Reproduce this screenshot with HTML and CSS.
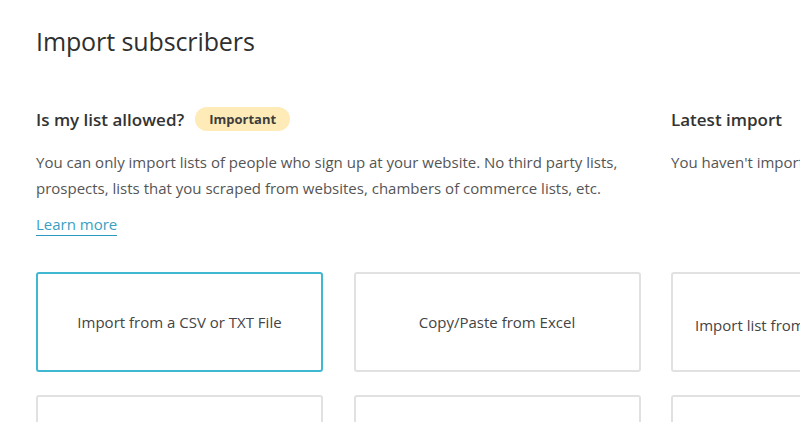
FILE: index.html
```
<!DOCTYPE html>
<html>
<head>
    <meta charset="utf-8" />
    <title>Import subscribers</title>
    <link rel="stylesheet" href="styles.css">
</head>
<body>
    <div class="page">
        <h1 class="page-title">Import subscribers</h1>

        <div class="info-row">
            <!-- 左侧说明 -->
            <div class="allowed">
                <h2 class="section-title">Is my list allowed? <span class="badge">Important</span></h2>
                <p class="section-text">You can only import lists of people who sign up at your website. No third party lists, prospects, lists that you scraped from websites, chambers of commerce lists, etc.</p>
                <a href="#" class="learn-more">Learn more</a>
            </div>
            <!-- 右侧最近导入 -->
            <div class="latest">
                <h2 class="section-title">Latest import</h2>
                <p class="section-text nowrap">You haven't imported any subscribers yet.</p>
            </div>
        </div>

        <div class="import-options">
            <div class="option active"><span>Import from a CSV or TXT File</span></div>
            <div class="option"><span>Copy/Paste from Excel</span></div>
            <div class="option lower"><span>Import list from MailChimp</span></div>
            <div class="option"></div>
            <div class="option"></div>
            <div class="option"></div>
        </div>
    </div>
</body>
</html>
```
FILE: styles.css
```
/* 全局样式 */
body {
    margin: 0;
    background-color: #ffffff;
    font-family: "Open Sans", "Liberation Sans", sans-serif;
    color: #444;
    overflow: hidden;
}

.page {
    padding: 25px 36px 0;
    width: 922px;
}

/* 页面标题 */
.page-title {
    margin: 0;
    font-size: 25px;
    line-height: 32px;
    font-weight: 500;
    color: #2f2f2f;
    letter-spacing: -0.1px;
}

/* 信息区 */
.info-row {
    display: grid;
    grid-template-columns: 605px 287px;
    column-gap: 30px;
    margin-top: 49px;
}

.section-title {
    margin: 0;
    display: flex;
    align-items: center;
    gap: 11px;
    height: 26px;
    font-size: 17px;
    font-weight: 600;
    color: #333;
}

.badge {
    display: inline-block;
    padding: 0 14px;
    height: 24px;
    line-height: 24px;
    border-radius: 12px;
    background-color: #feebb8;
    font-size: 13px;
    font-weight: 700;
    color: #3d3d3d;
}

.section-text {
    margin: 17px 0 0;
    font-size: 15px;
    line-height: 26px;
    color: #555;
}

.nowrap {
    white-space: nowrap;
}

.learn-more {
    display: inline-block;
    margin-top: 12px;
    font-size: 15px;
    line-height: 22px;
    color: #3a9fc1;
    text-decoration: none;
    border-bottom: 1px solid #2a9bbd;
}

/* 导入选项卡片 */
.import-options {
    display: grid;
    grid-template-columns: repeat(3, 287px);
    column-gap: 30.5px;
    row-gap: 23px;
    margin-top: 36px;
}

.option {
    box-sizing: border-box;
    height: 100px;
    border: 2px solid #e1e1e1;
    border-radius: 3px;
    display: flex;
    align-items: center;
    justify-content: center;
    font-size: 15px;
    color: #444;
}

.option.active {
    border-color: #41b8d2;
}

.option.lower {
    justify-content: flex-start;
    padding: 6px 0 0 22px;
}
```
